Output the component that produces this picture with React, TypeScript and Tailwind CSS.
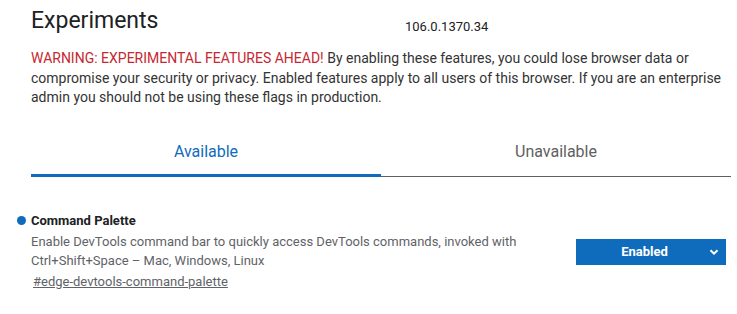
import React from "react";

export default function App() {
  return (
    <div
      className="w-[737px] h-[314px] bg-white overflow-hidden text-[#202124]"
      style={{ fontFamily: "Roboto, 'Liberation Sans', sans-serif" }}
    >
      <div className="ml-[31px] w-[700px]">
        <div className="flex items-baseline pt-[6px]">
          <h1 className="w-[374px] text-[23px] leading-[30px] font-normal text-[#202124]">
            Experiments
          </h1>
          <span className="text-[13px] text-[#202124] relative top-[3px]">106.0.1370.34</span>
        </div>
        <p className="mt-[13px] text-[14px] leading-[19.5px] text-[#333] pr-[6px]">
          <span className="text-[#c5282f]">WARNING: EXPERIMENTAL FEATURES AHEAD!</span> By enabling these
          features, you could lose browser data or compromise your security or privacy. Enabled features
          apply to all users of this browser. If you are an enterprise admin you should not be using these
          flags in production.
        </p>
        <div className="mt-[31px] flex">
          <div className="w-[350px] h-[38px] flex items-start justify-center border-b-[3px] border-[#0f6cbd]">
            <span className="text-[16px] text-[#0f6cbd] leading-[20px] mt-[3px]">Available</span>
          </div>
          <div className="flex-1 h-[38px] flex items-start justify-center border-b border-[#606060]">
            <span className="text-[16px] text-[#606060] leading-[20px] mt-[3px]">Unavailable</span>
          </div>
        </div>
        <div className="mt-[36px] flex items-start">
          <div className="flex-1">
            <div className="relative flex items-center">
              <span className="absolute left-[-14px] top-[3px] w-[9px] h-[9px] rounded-full bg-[#0f6cbd]" />
              <span className="text-[13px] font-bold leading-[16px] text-[#202124]">Command Palette</span>
            </div>
            <p className="mt-[3px] text-[13px] leading-[19.5px] text-[#5f6368] w-[520px]">
              Enable DevTools command bar to quickly access DevTools commands, invoked with
              Ctrl+Shift+Space – Mac, Windows, Linux
            </p>
            <a className="block mt-[2px] ml-[2px] text-[13px] leading-[18px] text-[#5f6368] underline">
              #edge-devtools-command-palette
            </a>
          </div>
          <div className="mt-[26px] mr-[5px] w-[150px] h-[26px] bg-[#0f6cbd] flex items-center text-white">
            <span className="flex-1 text-center text-[13px] font-bold pl-[4px]">Enabled</span>
            <svg width="10" height="10" viewBox="0 0 10 10" className="mr-[7px]">
              <path d="M1.5 3.2 L5 6.7 L8.5 3.2" fill="none" stroke="white" strokeWidth="2" />
            </svg>
          </div>
        </div>
      </div>
    </div>
  );
}
